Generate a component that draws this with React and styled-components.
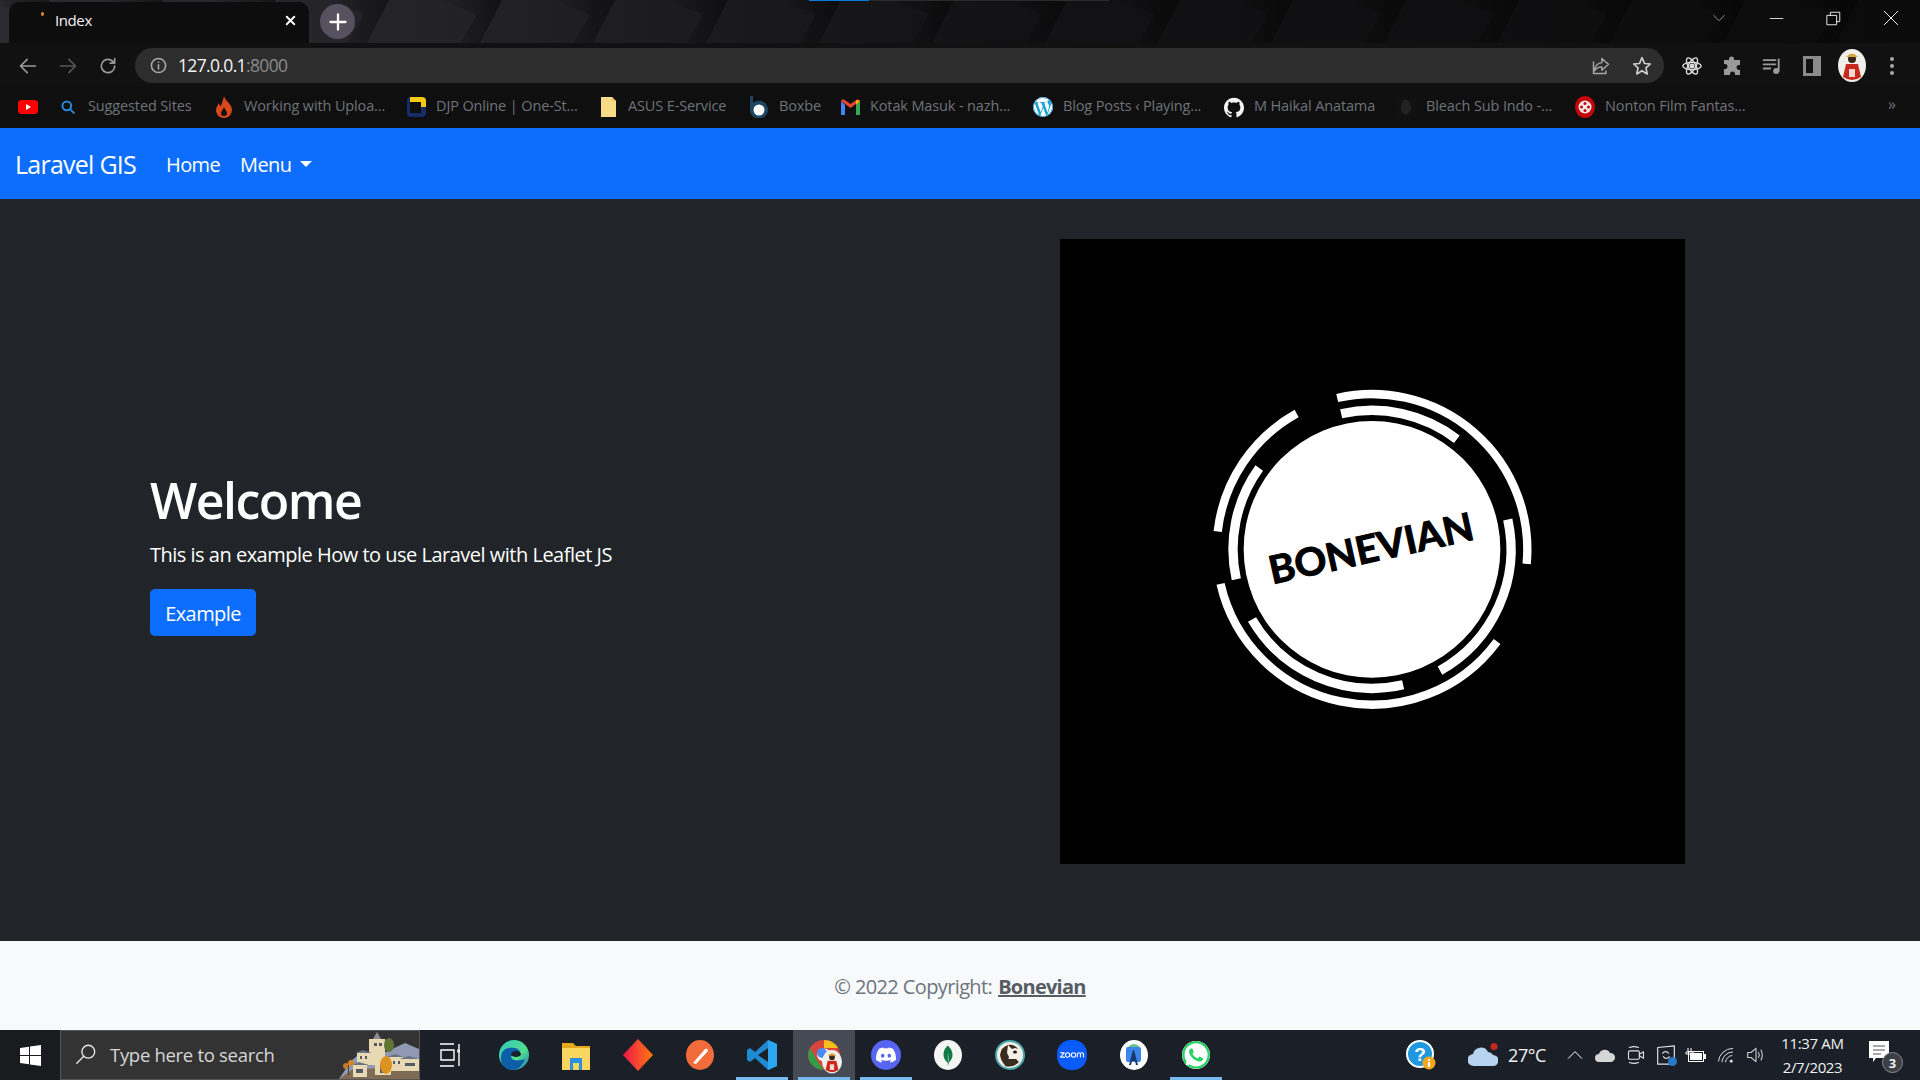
import React from "react";
import styled, { createGlobalStyle } from "styled-components";
import { SiDiscord, SiMongodb, SiZoom, SiWhatsapp, SiGithub, SiWordpress } from "react-icons/si";

const UI = `"Open Sans", "Noto Sans", "Liberation Sans", sans-serif`;

const Global = createGlobalStyle`
  html, body { margin: 0; padding: 0; background: #212529; }
  * { box-sizing: border-box; }
  body { font-family: ${UI}; overflow: hidden; }
`;

const Screen = styled.div`
  width: 1920px; height: 1080px; display: flex; flex-direction: column; overflow: hidden;
`;

/* Browser chrome */
const TabStrip = styled.div`
  position: relative; height: 43px; flex: none; display: flex; align-items: flex-start;
  padding-left: 9px; background: #0b0b0c; overflow: hidden;
`;
const Wallpaper = styled.svg`
  position: absolute; inset: 0; width: 100%; height: 100%;
`;
const LoadBar = styled.div`
  position: absolute; top: 0; left: 809px; width: 300px; height: 1px; background: #2b2b2b;
  &::before { content: ""; position: absolute; left: 0; top: 0; width: 60px; height: 1px; background: #0a78e0; }
`;
const Tab = styled.div`
  position: relative; width: 300px; height: 41px; margin-top: 2px; background: #0d0d0e;
  border-radius: 10px 10px 0 0; display: flex; align-items: center; padding: 0 0 5px 46px;
  color: #f2f2f2; font-size: 15px; letter-spacing: -0.4px;
`;
const TabDot = styled.span`
  position: absolute; left: 32px; top: 10px; width: 3px; height: 4px; border-radius: 50%; background: #e88a2a;
`;
const TabClose = styled.span`
  position: absolute; right: 12px; top: 12px; width: 13px; height: 13px; display: flex;
`;
const NewTab = styled.div`
  position: relative; width: 35px; height: 35px; margin: 4px 0 0 11px; border-radius: 50%; background: #56505f;
  display: flex; align-items: center; justify-content: center;
`;
const WindowButtons = styled.div`
  position: relative; margin-left: auto; display: flex; height: 36px;
`;
const WindowButton = styled.div`
  width: 57.5px; display: flex; align-items: center; justify-content: center;
`;
const Toolbar = styled.div`
  height: 43px; flex: none; display: flex; align-items: flex-start; padding: 5px 8px 0 8px; background: #111112;
`;
const ToolIcon = styled.div`
  width: 40px; height: 35px; flex: none; display: flex; align-items: center; justify-content: center;
`;
const Omnibox = styled.div`
  width: 1529px; height: 35px; margin: 0 8px 0 7px; flex: none; border-radius: 18px; background: #2d2d2e;
  display: flex; align-items: center; padding: 0 10px 0 15px;
`;
const Url = styled.div`
  margin-left: 11px; padding-bottom: 2px; font-size: 17.5px; letter-spacing: -0.65px; color: #f4f4f4;
  span { color: #8b8b8b; }
`;
const OmniRight = styled.div`
  margin-left: auto; display: flex; gap: 21px; align-items: center; padding-right: 2px;
`;
const Bookmarks = styled.div`
  height: 42px; flex: none; display: flex; align-items: center; padding-left: 18px; background: #0f0f10;
  position: relative;
`;
const Bookmark = styled.div`
  width: ${p => p.$w}px; flex: none; display: flex; align-items: center; gap: 10px; white-space: nowrap;
  font-size: 14.5px; letter-spacing: -0.13px; color: #6e7378;
`;
const BookLabel = styled.span`
  padding-bottom: 4px;
`;
const BookIcon = styled.span`
  width: 20px; height: 20px; flex: none; display: flex; align-items: center; justify-content: center;
`;
const MoreMarks = styled.div`
  position: absolute; right: 24px; top: 7px; color: #6e7378; font-size: 16px;
`;

/* Page */
const Navbar = styled.nav`
  height: 71px; flex: none; background: #0d6efd; display: flex; align-items: center; padding-left: 15px; color: #fff;
`;
const Brand = styled.div`
  font-size: 25px; letter-spacing: -0.75px; margin-right: 20px;
`;
const NavLink = styled.div`
  font-size: 20px; letter-spacing: -0.62px; padding: 2px 10px 0; display: flex; align-items: center; gap: 9px;
`;
const Caret = styled.span`
  width: 0; height: 0; border-left: 6px solid transparent; border-right: 6px solid transparent; border-top: 6px solid #fff;
  margin-bottom: 2px;
`;
const Main = styled.main`
  flex: 1; background: #212529; padding: 40px 0 77px;
`;
const Container = styled.div`
  width: 1650px; margin: 0 auto; display: grid; grid-template-columns: 1fr 1fr; height: 100%;
`;
const Intro = styled.div`
  padding: 3px 15px 0; display: flex; flex-direction: column; justify-content: center; align-items: flex-start; color: #fff;
`;
const Heading = styled.h1`
  margin: 0 0 10px; font-size: 50px; line-height: 60px; font-weight: 600; letter-spacing: -1.5px;
`;
const Lead = styled.p`
  margin: 0 0 19px; font-size: 20px; line-height: 30px; letter-spacing: -0.5px;
`;
const PrimaryButton = styled.button`
  width: 106px; height: 47px; border: 0; border-radius: 5px; background: #0d6efd; color: #fff;
  font: 20px ${UI}; letter-spacing: -0.6px; padding: 2px 0 0;
`;
const Figure = styled.div`
  display: flex; justify-content: center;
`;
const LogoImage = styled.svg`
  width: 625px; height: 625px; display: block; background: #000;
`;
const Footer = styled.footer`
  height: 89px; flex: none; background: #f8f9fa; display: flex; align-items: center; justify-content: center;
  font-size: 20px; letter-spacing: -0.62px; color: #6c757d; padding-top: 1px;
  strong { margin-left: 6px; color: #555c63; text-decoration: underline; font-weight: 700; letter-spacing: -0.75px; }
`;

/* Taskbar */
const Taskbar = styled.div`
  height: 50px; flex: none; background: #1b2028; display: flex; color: #f0f0f0;
`;
const StartButton = styled.div`
  width: 60px; display: flex; align-items: center; justify-content: center; background: #191b1f;
`;
const SearchBox = styled.div`
  position: relative; width: 360px; background: #333; border: 1px solid #555;
  display: flex; align-items: center; gap: 13px; padding: 0 0 2px 14px; color: #d6d6d6; font-size: 18.5px; letter-spacing: -0.3px;
  overflow: hidden;
`;
const Village = styled.svg`
  position: absolute; right: 0; bottom: 0; width: 80px; height: 50px;
`;
const AppSlot = styled.div`
  position: relative; width: ${p => p.$w || 62}px; flex: none; display: flex; align-items: center; justify-content: center;
  padding-right: ${p => p.$nudge || 0}px;
  background: ${p => p.$focus ? "#464a55" : "transparent"};
  &::after {
    content: ""; display: ${p => p.$open ? "block" : "none"}; position: absolute; bottom: 0; left: 5px; right: 5px; height: 3px;
    background: #76b9ed;
  }
`;
const Tray = styled.div`
  margin-left: auto; display: flex; align-items: stretch; padding-right: 5px;
`;
const TraySlot = styled.div`
  position: relative; width: ${p => p.$w}px; flex: none; display: flex; align-items: center; justify-content: center;
`;
const Weather = styled.div`
  width: 112px; display: flex; align-items: center; gap: 10px; padding-left: 20px; font-size: 18px; letter-spacing: -0.4px;
`;
const Clock = styled.div`
  width: 85px; display: flex; flex-direction: column; align-items: center; justify-content: center; font-size: 15px; line-height: 24px; letter-spacing: -0.35px;
`;
const NotifyBadge = styled.span`
  position: absolute; right: 12px; bottom: 7px; width: 21px; height: 21px; border-radius: 50%; background: #3c3f44; border: 1px solid #8a8a8a;
  font-size: 13px; font-weight: 700; display: flex; align-items: center; justify-content: center; color: #eee;
`;
const Layered = styled.span`
  position: relative; display: flex;
`;
const CornerBadge = styled.span`
  position: absolute; right: ${p => p.$r}px; bottom: ${p => p.$b}px; display: flex;
`;

const Stroke = ({ s = 20, c = "#8f8f8f", w = 2, children, box = 24 }) => (
  <svg width={s} height={s} viewBox={`0 0 ${box} ${box}`} fill="none" stroke={c} strokeWidth={w} strokeLinecap="round" strokeLinejoin="round">{children}</svg>
);

const tiles = Array.from({ length: 20 }, (_, i) => i * 113 - 100);
const WallArt = () => (
  <Wallpaper viewBox="0 0 1920 43" preserveAspectRatio="none">
    <defs>
      <linearGradient id="fade" x1="0" x2="1"><stop offset="0" stopColor="#2b2b30" /><stop offset=".25" stopColor="#222226" /><stop offset=".5" stopColor="#131315" /><stop offset="1" stopColor="#0b0b0c" /></linearGradient>
      <linearGradient id="slant" x1="0" x2="1"><stop offset="0" stopColor="#000" stopOpacity="0" /><stop offset="1" stopColor="#000" stopOpacity=".7" /></linearGradient>
    </defs>
    <rect width="1920" height="43" fill="url(#fade)" />
    {tiles.map(x => (
      <path key={x} d={`M${x + 88} 0 L${x + 122} 13 Q${x + 125} 15 ${x + 123} 18 L${x + 108} 43 L${x + 128} 43 L${x + 150} 0Z`} fill="url(#slant)" opacity=".65" />
    ))}
  </Wallpaper>
);

const Avatar = ({ s = 28 }) => (
  <svg width={s} height={s * 33 / 28} viewBox="0 0 28 33">
    <ellipse cx="14" cy="16.5" rx="14" ry="16.5" fill="#f1efea" />
    <path d="M8 15h12l3 13q-9 6-18 0z" fill="#c9281e" />
    <circle cx="14" cy="10" r="4" fill="#3a2416" />
    <path d="M8 8q6-7 12 0z" fill="#d9a23c" />
    <path d="M11 20h6v8h-6z" fill="#f3d9d0" />
  </svg>
);

const marks = [
  { w: 156, t: "Suggested Sites", i: <Stroke s={14} c="#2b87d8" w={3.400}><circle cx="10" cy="10" r="7.500" /><path d="M16 16l6 6" /></Stroke> },
  { w: 192, t: "Working with Uploa...", i: <svg width="18" height="22" viewBox="0 0 18 22"><path d="M9 0c1 5 7 7 8 13 0 6-4 9-8 9s-8-3-8-8c0-3 2-5 3-7 0 2 1 3 2 3 1-3 2-6 3-10z" fill="#d9481c" /><path d="M9 11c1 3 3 4 3 6s-1 3-3 3-3-1-3-3 2-3 3-6z" fill="#0f0f10" /></svg> },
  { w: 192, t: "DJP Online | One-St...", i: <svg width="19" height="20" viewBox="0 0 19 20"><path d="M3 0h12q4 0 4 4v6h-5V5H3z" fill="#f6c915" /><path d="M0 4q0-4 3-4v16h11v-6h5v6q0 4-4 4H4q-4 0-4-4z" fill="#162c66" /></svg> },
  { w: 151, t: "ASUS E-Service", i: <svg width="15" height="20" viewBox="0 0 15 20"><path d="M0 0h11l4 4v16H0z" fill="#f7dc85" /><path d="M11 0v4h4z" fill="#e6c25c" /></svg> },
  { w: 91, t: "Boxbe", i: <svg width="20" height="22" viewBox="0 0 20 22"><path d="M1 0h3v7a9 9 0 1 1-3 7z" fill="#1d4560" /><circle cx="10" cy="14" r="5.500" fill="#fff" /></svg> },
  { w: 193, t: "Kotak Masuk - nazh...", i: <svg width="19" height="16" viewBox="0 0 19 16"><path d="M0 2v14h4V6z" fill="#4285f4" /><path d="M15 6v10h4V2z" fill="#34a853" /><path d="M0 2 9.500 9 19 2q0-2-3-1.500L9.500 5 3 .5Q0 0 0 2z" fill="#ea4335" /><path d="M15 1l4 1-4 4z" fill="#fbbc04" /></svg> },
  { w: 191, t: "Blog Posts ‹ Playing...", i: <SiWordpress size={20} color="#1fa2d8" style={{ background: "#fff", borderRadius: "50%" }} /> },
  { w: 172, t: "M Haikal Anatama", i: <SiGithub size={21} color="#f4f4f4" /> },
  { w: 179, t: "Bleach Sub Indo -...", i: <svg width="20" height="20" viewBox="0 0 20 20"><rect width="20" height="20" fill="#121212" /><ellipse cx="10" cy="10" rx="5" ry="7" fill="#232323" /></svg> },
  { w: 170, t: "Nonton Film Fantas...", i: <svg width="20" height="22" viewBox="0 0 20 22"><ellipse cx="10" cy="11" rx="10" ry="11" fill="#c4060a" /><circle cx="10" cy="11" r="6.500" fill="#f5e6e6" /><g fill="#c4060a"><circle cx="10" cy="7.500" r="1.500" /><circle cx="10" cy="14.500" r="1.500" /><circle cx="6.500" cy="11" r="1.500" /><circle cx="13.500" cy="11" r="1.500" /></g></svg> },
];

const CX = 546, CY = 541;
const arcPath = (r, x1, y1, x2, y2, sweep) => {
  const p = (x, y) => { const a = Math.atan2(y - CY, x - CX); return `${(CX + r * Math.cos(a)).toFixed(1)} ${(CY + r * Math.sin(a)).toFixed(1)}`; };
  return `M${p(x1, y1)} A${r} ${r} 0 0 ${sweep} ${p(x2, y2)}`;
};
const arcs = [
  [466, 440, 80, 1012, 585, 1, 25],
  [466, 318, 130, 80, 487, 0, 25],
  [466, 90, 645, 925, 820, 0, 25],
  [417, 452, 128, 805, 205, 1, 28],
  [417, 205, 295, 135, 632, 0, 28],
  [417, 180, 755, 640, 950, 0, 28],
  [417, 960, 450, 750, 905, 1, 28],
];
const Logo = () => (
  <LogoImage viewBox="0 0 625 625">
    <g transform="translate(130 130) scale(.33333)" fill="none" stroke="#fff">
      {arcs.map(([r, x1, y1, x2, y2, sw, w]) => <path key={`${x1}${y1}`} d={arcPath(r, x1, y1, x2, y2, sw)} strokeWidth={w} />)}
      <circle cx={CX} cy={CY} r="385" fill="#fff" stroke="none" />
      <text x="552" y="578" transform="rotate(-12.500 552 578)" textAnchor="middle" fill="#000" stroke="#000" strokeWidth="3" fontFamily="Lato, sans-serif" fontWeight="700" fontSize="116" textLength="625" lengthAdjust="spacingAndGlyphs">BONEVIAN</text>
    </g>
  </LogoImage>
);

const VillageArt = () => (
  <Village viewBox="0 0 80 50">
    <path d="M0 50 L12 32 L24 22 L40 26 L66 14 L80 20 V50Z" fill="#8f99b4" />
    <path d="M0 50 L14 40 L80 38 V50Z" fill="#7f6b54" />
    <g fill="#e8d9b5">
      <rect x="18" y="24" width="14" height="12" /><rect x="30" y="10" width="16" height="26" /><rect x="14" y="36" width="14" height="12" /><rect x="36" y="30" width="16" height="16" /><rect x="50" y="28" width="14" height="14" /><rect x="62" y="30" width="18" height="12" />
    </g>
    <g fill="#6d7280"><path d="M16 24l8-3 9 3zM12 36l8-3 10 3zM48 28l8-3 9 3zM60 30l10-3 10 3z" /></g>
    <g fill="#555b66"><rect x="21" y="27" width="2" height="3" /><rect x="26" y="27" width="2" height="3" /><rect x="35" y="14" width="3" height="3" /><rect x="40" y="14" width="3" height="3" /><rect x="54" y="32" width="2" height="3" /><rect x="59" y="32" width="2" height="3" /><rect x="66" y="34" width="10" height="3" /><rect x="17" y="40" width="7" height="4" /><rect x="41" y="36" width="4" height="8" /></g>
    <circle cx="7" cy="37" r="3" fill="#c27a2c" /><circle cx="12" cy="34" r="3" fill="#d6872a" /><rect x="9" y="36" width="1" height="10" fill="#50402e" />
    <ellipse cx="50" cy="16" rx="5" ry="7" fill="#5e7534" />
    <ellipse cx="47" cy="36" rx="6" ry="9" fill="#dd9320" />
    <path d="M34 10 L38 3 L42 10Z" fill="#8b8d96" />
  </Village>
);

const apps = [
  { i: <svg width="30" height="30" viewBox="0 0 30 30"><defs><linearGradient id="edg" x1="0" y1="0" x2="1" y2="1"><stop offset="0" stopColor="#2fc7c0" /><stop offset=".6" stopColor="#53df8c" /><stop offset="1" stopColor="#1b72c9" /></linearGradient></defs><circle cx="15" cy="15" r="15" fill="url(#edg)" /><path d="M2 17C3 8 10 7 16 8c5 1 6 5 5 8h-9c0 4 5 6 14 3-3 8-8 11-13 11C6 30 1 24 2 17z" fill="#0c5ea8" /><ellipse cx="17" cy="14" rx="5" ry="3" fill="#1b2028" /></svg> },
  { i: <svg width="28" height="30" viewBox="0 0 28 30"><path d="M0 3h11l3 3h14v24H0z" fill="#e3a81c" /><rect y="8" width="28" height="22" fill="#f9d65f" /><path d="M8 18h12v12h-3v-7h-6v7H8z" fill="#2a8fdc" /></svg> },
  { i: <svg width="30" height="32" viewBox="0 0 30 32"><defs><linearGradient id="dia" x1="0" x2="1"><stop offset="0" stopColor="#f0164a" /><stop offset="1" stopColor="#ff7a10" /></linearGradient></defs><path d="M15 0 L30 16 L15 32 L0 16Z" fill="url(#dia)" /></svg> },
  { i: <svg width="28" height="30" viewBox="0 0 28 30"><ellipse cx="14" cy="15" rx="14" ry="15" fill="#f26b3a" /><path d="M7 23 19 9q3-1 3 2L10 24z" fill="#fff" /></svg> },
  { open: 1, i: <svg width="30" height="30" viewBox="0 0 30 30"><path d="M21 0 30 4V26L21 30 8 18l-5 4-3-2v-10l3-2 5 4z" fill="#1e8ad2" /><path d="M21 8 11 15l10 7z" fill="#1b2028" /><path d="M21 0 30 4V26L21 30z" fill="#2ba7ee" /></svg> },
  { open: 1, focus: 1, i: <Layered><svg width="32" height="30" viewBox="0 0 32 30"><ellipse cx="16" cy="15" rx="16" ry="15" fill="#d9453a" /><path d="M16 0a16 15 0 0 1 14 8H16z" fill="#f4c01c" /><path d="M2 8 10 22 16 30A16 15 0 0 1 2 8z" fill="#2f9e46" /><ellipse cx="16" cy="15" rx="7" ry="6.500" fill="#fff" /><ellipse cx="14" cy="13" rx="5" ry="5" fill="#4a8bf1" /></svg><CornerBadge $r={-2} $b={-4}><Avatar s={20} /></CornerBadge></Layered> },
  { open: 1, i: <svg width="30" height="30" viewBox="0 0 30 30"><ellipse cx="15" cy="15" rx="15" ry="15" fill="#5865f2" /><foreignObject x="5" y="5" width="20" height="20"><SiDiscord size={20} color="#fff" /></foreignObject></svg> },
  { i: <svg width="28" height="30" viewBox="0 0 28 30"><ellipse cx="14" cy="15" rx="14" ry="15" fill="#f5f5f3" /><foreignObject x="4" y="5" width="20" height="20"><SiMongodb size={20} color="#127a46" /></foreignObject></svg> },
  { i: <svg width="30" height="30" viewBox="0 0 30 30"><circle cx="15" cy="15" r="14" fill="#f4efe6" stroke="#4aa9ad" strokeWidth="2" /><path d="M5 15q1-8 8-10l-1 8 2 4-3 9q-5-4-6-11z" fill="#3a2b20" /><path d="M13 5q6-1 10 4l-3-1-3 1zM10 26l2-7h9l3 3q-6 6-14 4z" fill="#3a2b20" /><ellipse cx="20" cy="12" rx="2" ry="1.500" fill="#1a1a1a" /></svg> },
  { i: <svg width="30" height="30" viewBox="0 0 30 30"><rect width="30" height="30" rx="14" fill="#0b5cff" /><foreignObject x="3" y="3" width="24" height="24"><SiZoom size={24} color="#fff" /></foreignObject></svg> },
  { i: <svg width="28" height="30" viewBox="0 0 28 30"><ellipse cx="14" cy="15" rx="14" ry="15" fill="#fff" /><rect x="6" y="7" width="15" height="15" rx="2" fill="#3c83ea" /><path d="M8 7q6-6 12 0z" fill="#5cc58b" /><path d="M13 10 9 25h2l1-4h3l1 4h2L14 10z" fill="#163a70" /></svg> },
  { open: 1, i: <SiWhatsapp size={28} color="#25d366" style={{ background: "#fff", borderRadius: "50%" }} /> },
];

export default function App() {
  return (
    <Screen>
      <Global />
      <TabStrip>
        <WallArt />
        <LoadBar />
        <Tab>
          <TabDot />
          Index
          <TabClose><Stroke s={13} c="#fff" w={3.500}><path d="M5 5l14 14M19 5L5 19" /></Stroke></TabClose>
        </Tab>
        <NewTab><Stroke s={20} c="#fff" w={2.800}><path d="M12 3v18M3 12h18" /></Stroke></NewTab>
        <WindowButtons>
          <WindowButton><Stroke s={16} c="#bdbdbd" w={1.100}><path d="M4 8l8 8 8-8" /></Stroke></WindowButton>
          <WindowButton><Stroke s={15} c="#f0f0f0" w={1.400}><path d="M2 12h20" /></Stroke></WindowButton>
          <WindowButton><Stroke s={15} c="#f0f0f0" w={1.500}><path d="M2 7h15v15H2zM7 7V2h15v15h-5" /></Stroke></WindowButton>
          <WindowButton><Stroke s={16} c="#f0f0f0" w={1.500}><path d="M2 2l20 20M22 2L2 22" /></Stroke></WindowButton>
        </WindowButtons>
      </TabStrip>
      <Toolbar>
        <ToolIcon><Stroke c="#999" w={2}><path d="M21 12H3M11 4l-8 8 8 8" /></Stroke></ToolIcon>
        <ToolIcon><Stroke c="#555" w={2}><path d="M3 12h18M13 4l8 8-8 8" /></Stroke></ToolIcon>
        <ToolIcon><Stroke c="#999" w={2}><path d="M20 12a8 8 0 1 1-2.500-5.800L20 8.500M20 3v5.500h-5.500" /></Stroke></ToolIcon>
        <Omnibox>
          <Stroke s={17} c="#a8a8a8" w={2.200}><circle cx="12" cy="12" r="10" /><path d="M12 11v6M12 7v.5" /></Stroke>
          <Url>127.0.0.1<span>:8000</span></Url>
          <OmniRight>
            <Stroke s={20} c="#a8a8a8" w={1.700}><path d="M13 3l8 7-8 7v-4q-6 0-9 5 1-9 9-10zM3 7v14h15v-3" /></Stroke>
            <Stroke s={20} c="#cfcfcf" w={2}><path d="M12 2l3 7 7 .6-5.300 4.700 1.600 7.200L12 17.600 5.700 21.500l1.600-7.200L2 9.600 9 9z" /></Stroke>
          </OmniRight>
        </Omnibox>
        <ToolIcon><Stroke s={22} c="#ddd" w={1.500}><ellipse cx="12" cy="12" rx="10" ry="4" /><ellipse cx="12" cy="12" rx="10" ry="4" transform="rotate(60 12 12)" /><ellipse cx="12" cy="12" rx="10" ry="4" transform="rotate(120 12 12)" /><circle cx="12" cy="12" r="2" fill="#ddd" /></Stroke></ToolIcon>
        <ToolIcon><svg width="20" height="20" viewBox="0 0 20 20" fill="#9a9a9a"><path d="M7 3a2.500 2.500 0 0 1 5 0v1h6v5h-1a2.500 2.500 0 0 0 0 5h1v5h-5v-1a2.500 2.500 0 0 0-5 0v1H2v-6h1a2.500 2.500 0 0 0 0-5H2V4h5z" /></svg></ToolIcon>
        <ToolIcon><Stroke c="#9a9a9a" w={2.200}><path d="M2 5h14M2 10h14M2 15h8" /><path d="M20 4v14" /><circle cx="17" cy="18" r="2.500" fill="#9a9a9a" /></Stroke></ToolIcon>
        <ToolIcon><svg width="18" height="20" viewBox="0 0 18 20"><path fillRule="evenodd" d="M0 0h18v20H0zM3 3v14h7V3z" fill="#8a8a8a" /></svg></ToolIcon>
        <ToolIcon><Avatar /></ToolIcon>
        <ToolIcon><svg width="4" height="20" viewBox="0 0 4 20" fill="#a8a8a8"><circle cx="2" cy="3" r="2" /><circle cx="2" cy="10" r="2" /><circle cx="2" cy="17" r="2" /></svg></ToolIcon>
      </Toolbar>
      <Bookmarks>
        <Bookmark $w={40}><BookIcon><svg width="20" height="14" viewBox="0 0 20 14"><rect width="20" height="14" rx="3.500" fill="#f00" /><path d="M8 4l5 3-5 3z" fill="#fff" /></svg></BookIcon></Bookmark>
        {marks.map(m => <Bookmark key={m.t} $w={m.w}><BookIcon>{m.i}</BookIcon><BookLabel>{m.t}</BookLabel></Bookmark>)}
        <MoreMarks>»</MoreMarks>
      </Bookmarks>

      <Navbar>
        <Brand>Laravel GIS</Brand>
        <NavLink>Home</NavLink>
        <NavLink>Menu <Caret /></NavLink>
      </Navbar>
      <Main>
        <Container>
          <Intro>
            <Heading>Welcome</Heading>
            <Lead>This is an example How to use Laravel with Leaflet JS</Lead>
            <PrimaryButton>Example</PrimaryButton>
          </Intro>
          <Figure><Logo /></Figure>
        </Container>
      </Main>
      <Footer>© 2022 Copyright: <strong>Bonevian</strong></Footer>

      <Taskbar>
        <StartButton><svg width="21" height="21" viewBox="0 0 21 21" fill="#fff"><path d="M0 3l9-1.300V10H0zM10 1.500 21 0v10H10zM0 11h9v8.300L0 18zM10 11h11v10l-11-1.500z" /></svg></StartButton>
        <SearchBox>
          <Stroke s={22} c="#e8e8e8" w={1.500}><circle cx="14.500" cy="9.500" r="7" /><path d="M9.500 14.500L2 22" /></Stroke>
          Type here to search
          <VillageArt />
        </SearchBox>
        <AppSlot $w={63} $nudge={3}><svg width="20" height="24" viewBox="0 0 20 24" fill="none" stroke="#fff" strokeWidth="1.400"><path d="M0 1h14M0 23h14M1 7h13v10H1zM19 1v5M19 10v13" /><path d="M18 7h2v2h-2z" fill="#fff" /></svg></AppSlot>
        {apps.map((a, i) => <AppSlot key={i} $open={a.open} $focus={a.focus}>{a.i}</AppSlot>)}
        <Tray>
          <TraySlot $w={54}>
            <svg width="30" height="30" viewBox="0 0 30 30"><circle cx="14" cy="14" r="13" fill="#1f98e0" stroke="#fff" strokeWidth="2" /><text x="14" y="21" textAnchor="middle" fontSize="19" fontWeight="700" fill="#fff" fontFamily="Liberation Sans, sans-serif">?</text><circle cx="23" cy="23" r="6.500" fill="#f5a81c" /><rect x="22" y="22" width="2" height="5" fill="#fff" /><rect x="22" y="19" width="2" height="2" fill="#fff" /></svg>
          </TraySlot>
          <Weather>
            <svg width="30" height="24" viewBox="0 0 30 24"><path d="M6 23a6 6 0 0 1-1-12 8 8 0 0 1 15-2 6 6 0 0 1 5 3 5.500 5.500 0 0 1 0 11z" fill="#b8d3f0" /><circle cx="26" cy="3.500" r="3.500" fill="#c4271c" /></svg>
            27°C
          </Weather>
          <TraySlot $w={30}><Stroke s={16} c="#fff" w={1.500}><path d="M2 17l10-10 10 10" /></Stroke></TraySlot>
          <TraySlot $w={30}><svg width="20" height="13" viewBox="0 0 20 13"><path d="M4 13a4 4 0 0 1 0-8 6 6 0 0 1 11-1 4.500 4.500 0 0 1 1 9z" fill="#d6d6d6" /></svg></TraySlot>
          <TraySlot $w={31}><Stroke s={20} c="#e0e0e0" w={1.300}><rect x="3" y="7" width="13" height="10" rx="1.500" /><path d="M16 11l5-3v8l-5-3M4 3q6-2 11 0M4 21q6 2 11 0" /></Stroke></TraySlot>
          <TraySlot $w={29}><Layered><Stroke s={20} c="#e0e0e0" w={1.400}><path d="M2 3l20-2v22H2zM8 10a4 4 0 0 1 7 0M16 14a4 4 0 0 1-7 0" /></Stroke><CornerBadge $r={-1} $b={-1}><svg width="9" height="9" viewBox="0 0 9 9"><circle cx="4.500" cy="4.500" r="4.500" fill="#2a78c8" /></svg></CornerBadge></Layered></TraySlot>
          <TraySlot $w={30}><svg width="21" height="14" viewBox="0 0 21 14"><path d="M3 0v4M6 0v4M1 4h7v2H1z" stroke="#fff" strokeWidth="1" /><rect x="3.500" y="3.500" width="15" height="10" fill="none" stroke="#fff" /><rect x="5" y="5" width="12" height="7" fill="#fff" /><rect x="19" y="6" width="2" height="5" fill="#fff" /></svg></TraySlot>
          <TraySlot $w={31}><Stroke s={17} c="#dadada" w={1.400}><path d="M2 20a20 20 0 0 1 20-18M7 21a15 15 0 0 1 15-14M12 21a10 10 0 0 1 9-9" /><circle cx="20" cy="20" r="1.500" fill="#fff" /></Stroke></TraySlot>
          <TraySlot $w={29}><Stroke s={20} c="#cfcfcf" w={1.300}><path d="M2 9h4l6-5v16l-6-5H2zM15 9q2 3 0 6M18 6q3 6 0 12" /></Stroke></TraySlot>
          <Clock><span>11:37 AM</span><span>2/7/2023</span></Clock>
          <TraySlot $w={60}>
            <svg width="22" height="22" viewBox="0 0 22 22" style={{ marginRight: 10, marginTop: -6 }}><path d="M0 0h20v17H7l-3 4v-4H0z" fill="#fff" /><path d="M4 5h12M4 9h12M4 13h8" stroke="#555" strokeWidth="1.200" /></svg>
            <NotifyBadge>3</NotifyBadge>
          </TraySlot>
        </Tray>
      </Taskbar>
    </Screen>
  );
}
